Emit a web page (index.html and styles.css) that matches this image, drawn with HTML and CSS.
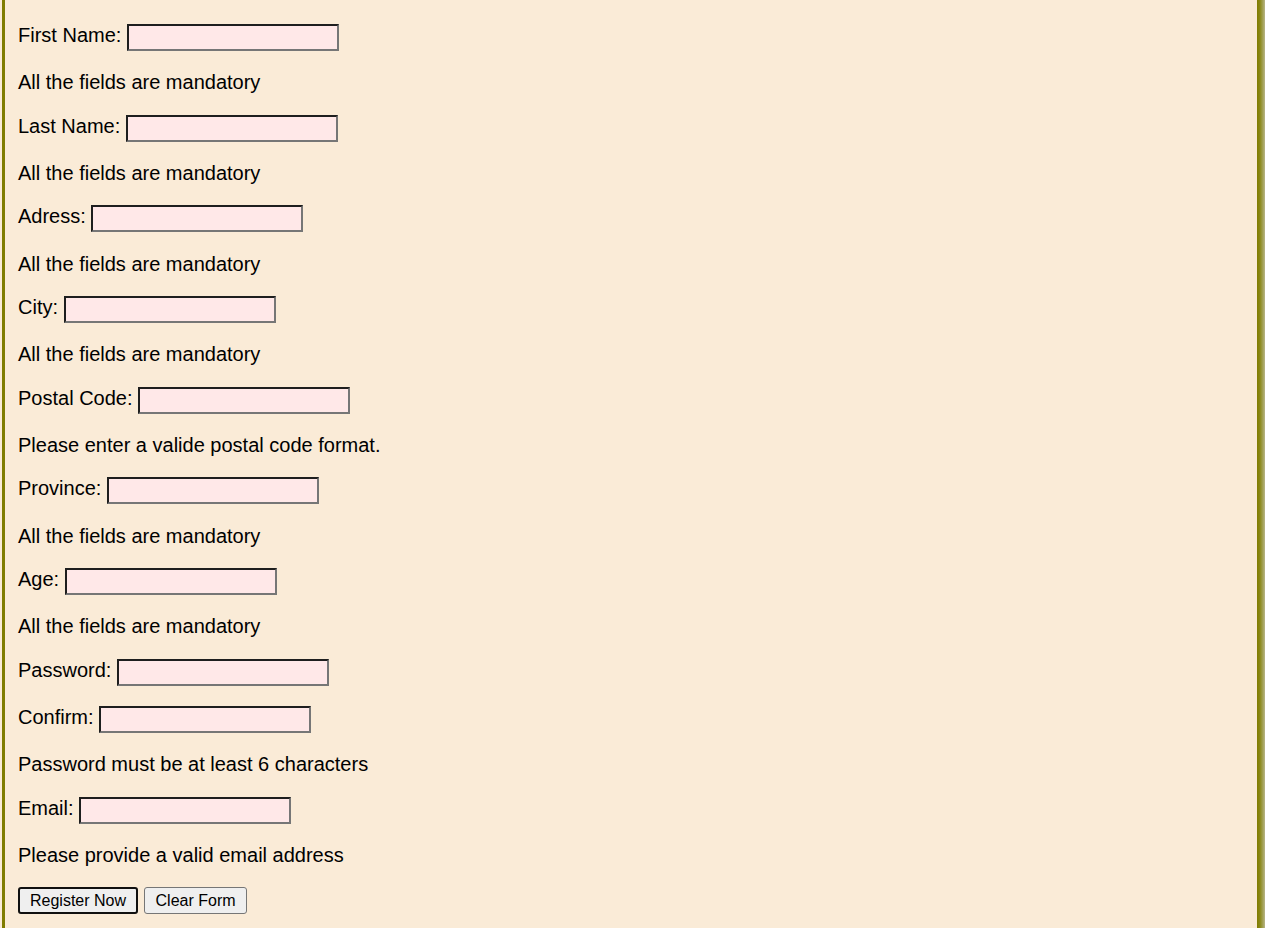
FILE: index.html
```html
<!DOCTYPE html>
<html lang="en">
<head>
<meta charset="utf-8">
<title>Registration</title>
<link rel="stylesheet" href="styles.css">
</head>
<body>
<form class="form">
  <p class="row"><label>First Name:</label> <input class="field" type="text"></p>
  <p class="msg">All the fields are mandatory</p>
  <p class="row"><label>Last Name:</label> <input class="field" type="text"></p>
  <p class="msg">All the fields are mandatory</p>
  <p class="row"><label>Adress:</label> <input class="field" type="text"></p>
  <p class="msg">All the fields are mandatory</p>
  <p class="row"><label>City:</label> <input class="field" type="text"></p>
  <p class="msg">All the fields are mandatory</p>
  <p class="row"><label>Postal Code:</label> <input class="field" type="text"></p>
  <p class="msg">Please enter a valide postal code format.</p>
  <p class="row"><label>Province:</label> <input class="field" type="text"></p>
  <p class="msg">All the fields are mandatory</p>
  <p class="row"><label>Age:</label> <input class="field" type="text"></p>
  <p class="msg">All the fields are mandatory</p>
  <p class="row"><label>Password:</label> <input class="field" type="password"></p>
  <p class="row"><label>Confirm:</label> <input class="field" type="password"></p>
  <p class="msg">Password must be at least 6 characters</p>
  <p class="row"><label>Email:</label> <input class="field" type="text"></p>
  <p class="msg">Please provide a valid email address</p>
  <p class="actions">
    <button class="btn btn-primary" type="submit">Register Now</button>
    <button class="btn" type="reset">Clear Form</button>
  </p>
</form>
</body>
</html>
```

FILE: styles.css
```css
html {
  background:
    linear-gradient(to right, #807c00 0, #8a8818 3px, #a4a25a 6px, #b8b688 8px) right top / 8px 100% no-repeat,
    linear-gradient(to right, #faebd7 0, #faebd7 2px, #807c00 2px, #807c00 5px, #faebd7 5px) left top / 100% 100% no-repeat,
    #faebd7;
  min-height: 100%;
}

body {
  margin: 0;
  padding: 3.67px 0 0 18px;
  font-family: "Liberation Sans", Arial, sans-serif;
  font-size: 20px;
  line-height: 23px;
  color: #000;
}

.form {
  margin: 0;
}

.row,
.msg,
.actions {
  margin: 20.33px 0;
}

.field {
  box-sizing: border-box;
  width: 212px;
  height: 27px;
  margin: 0;
  padding: 1px 2px;
  font-family: "Liberation Sans", Arial, sans-serif;
  font-size: 13.33px;
  line-height: normal;
  background: #ffe8e8;
  border-style: solid;
  border-width: 2px;
  border-color: #1e1e1e #767676 #767676 #1e1e1e;
  vertical-align: baseline;
}

.actions {
  display: flex;
  gap: 6px;
  margin-bottom: 0;
}

.btn {
  box-sizing: border-box;
  height: 27px;
  margin: 0;
  padding: 0 10.5px;
  font-family: "Liberation Sans", Arial, sans-serif;
  font-size: 16px;
  line-height: normal;
  color: #000;
  background: #efefef;
  border: 1px solid #767676;
  border-radius: 3px;
}

.btn-primary {
  padding: 0 10px;
  border: 2px solid #101010;
}
```
